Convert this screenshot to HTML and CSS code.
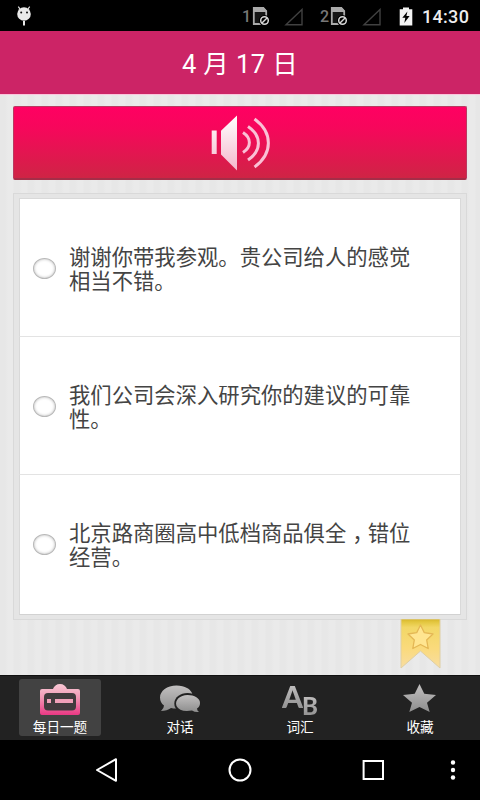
FILE: index.html
```html
<!DOCTYPE html>
<html lang="zh-CN">
<head>
<meta charset="utf-8">
<title>4 月 17 日</title>
<link rel="stylesheet" href="styles.css">
</head>
<body>
<div class="status">
  <svg class="droid" width="16" height="22" viewBox="0 0 16 22"><circle cx="8" cy="9" r="6.8" fill="#e9e9e9"/><path d="M4 4 2.3 1.6M12 4l1.7-2.4" stroke="#e9e9e9" stroke-width="1.2"/><path d="M8 16v4.6" stroke="#e9e9e9" stroke-width="2"/><circle cx="5.2" cy="7.5" r="1" fill="#111"/><circle cx="11" cy="7.5" r="1" fill="#111"/></svg>
  <div class="sim"><span>1</span>
    <svg width="18" height="20" viewBox="0 0 18 20"><path d="M1.800 18V1.800h9.400l3 3.400V18z" fill="#151515" stroke="#aaa" stroke-width="1.800"/><path d="M1 1h10.500L15 5v1H1z" fill="#aaa"/><circle cx="12.500" cy="14.500" r="5.500" fill="#000"/><circle cx="12.500" cy="14.500" r="3.800" fill="none" stroke="#d8d8d8" stroke-width="1.500"/><path d="m10 17 5-5" stroke="#d8d8d8" stroke-width="1.500"/></svg>
    <svg class="signal" width="20" height="18" viewBox="0 0 20 18"><path d="M2 16.700 18 1.500v15.200z" fill="none" stroke="#414141" stroke-width="1.400"/></svg>
  </div>
  <div class="sim sim2"><span>2</span>
    <svg width="18" height="20" viewBox="0 0 18 20"><path d="M1.800 18V1.800h9.400l3 3.400V18z" fill="#151515" stroke="#aaa" stroke-width="1.800"/><path d="M1 1h10.500L15 5v1H1z" fill="#aaa"/><circle cx="12.500" cy="14.500" r="5.500" fill="#000"/><circle cx="12.500" cy="14.500" r="3.800" fill="none" stroke="#d8d8d8" stroke-width="1.500"/><path d="m10 17 5-5" stroke="#d8d8d8" stroke-width="1.500"/></svg>
    <svg class="signal" width="20" height="18" viewBox="0 0 20 18"><path d="M2 16.700 18 1.500v15.200z" fill="none" stroke="#414141" stroke-width="1.400"/></svg>
  </div>
  <svg class="battery" width="14" height="19" viewBox="0 0 14 19"><path d="M.7 2.200H4V.5h6v1.700h3.300v16.300H.7z" fill="#f3f3f3"/><path d="M8.400 4.500 3.300 10.800h3L5.300 16l5.300-7H7.400z" fill="#000"/></svg>
  <time>14:30</time>
</div>
<header>4 月 17 日</header>
<main>
  <button class="play" aria-label="播放">
    <svg width="64" height="60" viewBox="0 0 64 60"><defs><linearGradient id="sp" x2="0" y2="1"><stop stop-color="#fff"/><stop offset="1" stop-color="#f5b7cc"/></linearGradient></defs><g fill="url(#sp)"><path d="M3.700 17.500h5v23.500h-5zM13 17.800 29 2.500v55L13 41.500z"/></g><g fill="none" stroke="#fac0d5" stroke-width="3"><path d="M35 19.500c8.500 5.500 8.500 14.500 0 20"/><path d="M40 13.500c13.900 9.500 13.900 24 0 33.500"/><path d="M46.500 6c18.500 13.500 18.500 34.500 0 48"/></g></svg>
  </button>
  <section class="panel">
    <label class="option"><i class="radio"></i><span class="text">谢谢你带我参观。贵公司给人的感觉<br>相当不错。</span></label>
    <label class="option"><i class="radio"></i><span class="text">我们公司会深入研究你的建议的可靠<br>性。</span></label>
    <label class="option"><i class="radio"></i><span class="text">北京路商圈高中低档商品俱全<span class="comma">，</span>错位<br>经营。</span></label>
  </section>
  <svg class="ribbon" width="41" height="52" viewBox="0 0 41 52"><defs><linearGradient id="rb" x2="0" y2="1"><stop stop-color="#d5b52a"/><stop offset=".06" stop-color="#e3c63e"/><stop offset=".17" stop-color="#f2d766"/><stop offset=".6" stop-color="#fada7c"/><stop offset="1" stop-color="#f8dda2"/></linearGradient></defs><path d="M1 0h39v49L20.500 32 1 49z" fill="url(#rb)" stroke="#dfcfa4" stroke-width="1"/><path d="m20.500 6 3.800 7.700 8.700 1.300-6.300 6 1.500 8.500-7.700-4-7.700 4 1.500-8.500-6.300-6 8.700-1.300z" fill="#ffe590" stroke="#e4b754" stroke-width="1.300" stroke-linejoin="round"/></svg>
</main>
<nav class="tabs">
  <div class="tab active">
    <svg width="42" height="34" viewBox="0 0 42 34"><defs><linearGradient id="pk" x2="0" y2="1"><stop stop-color="#f8c9d5"/><stop offset=".45" stop-color="#f296b4"/><stop offset="1" stop-color="#e93883"/></linearGradient></defs><path d="M3 6h11C15 3 17.500 1 21 1s6 2 7 5h11q2 0 2 2v22q0 2-2 2H3q-2 0-2-2V8q0-2 2-2z" fill="url(#pk)"/><rect x="5" y="10" width="32" height="17.500" rx="4" fill="#423b3e"/><path d="M8 16h4v4H8zM16 16h18v4H16z" fill="#f1a0b9"/></svg><span>每日一题</span></div>
  <div class="tab">
    <svg width="42" height="34" viewBox="0 0 42 34"><defs><linearGradient id="gr" x2="0" y2="1"><stop stop-color="#c2c0c0"/><stop offset="1" stop-color="#8d8d8d"/></linearGradient></defs><path d="M17.500 2.500C8 2.500 1 8 1 14.500q0 5 4 8 0 3-3 5.500 6 0 10-3 7 1.500 13-1.500C36 20 36 9 28 5Q24 2.500 17.500 2.500z" fill="url(#gr)"/><ellipse cx="28.500" cy="20.500" rx="13.200" ry="10.500" fill="#222"/><path d="M28.500 12c7 0 12.500 3.500 12.500 8q0 3.500-3 5.500 0 2 2 3.500-4 .5-7-1.500-12 2-15.500-4.500c-2-6 3.500-11 11-11z" fill="url(#gr)"/></svg><span>对话</span></div>
  <div class="tab">
    <div class="ab"><b>A</b><b class="b">B</b></div><span>词汇</span></div>
  <div class="tab">
    <svg width="42" height="34" viewBox="0 0 42 34"><path d="m20.500 1 4.800 9.800 11.700 1.200-9 7.800 2.700 9.200-10.200-5-10.200 5 2.700-9.200-9-7.800 11.700-1.200z" fill="url(#gr)"/></svg><span>收藏</span></div>
</nav>
<div class="system">
  <svg width="24" height="26" viewBox="0 0 24 26"><path d="m2 13 19-10.800v21.600z" fill="none" stroke="#fff" stroke-width="2" stroke-linejoin="round"/></svg>
  <svg width="24" height="26" viewBox="0 0 24 26"><circle cx="12" cy="13" r="10.500" fill="none" stroke="#fff" stroke-width="2"/></svg>
  <svg width="24" height="26" viewBox="0 0 24 26"><rect x="2.600" y="4" width="19.400" height="18" fill="none" stroke="#fff" stroke-width="2"/></svg>
  <svg class="more" width="6" height="26" viewBox="0 0 6 26"><g fill="#fff"><circle cx="3" cy="5.500" r="2.200"/><circle cx="3" cy="13" r="2.200"/><circle cx="3" cy="20.500" r="2.200"/></g></svg>
</div>
</body>
</html>
```
FILE: styles.css
```css
* { box-sizing: border-box; }
body {
  margin: 0;
  width: 480px;
  height: 800px;
  overflow: hidden;
  display: flex;
  flex-direction: column;
  background: #000;
  font-family: Roboto, "Noto Sans CJK SC", sans-serif;
}
svg { display: block; flex: none; }
.status {
  height: 31px;
  display: flex;
  align-items: center;
  padding: 1px 0 0 16px;
  color: #eee;
}
.droid { margin-right: 210px; }
.sim { display: flex; align-items: center; color: #777; font: 500 16px Roboto, sans-serif; width: 78px; }
.sim span { width: 10px; }
.signal { margin: 2px 0 0 14px; }
.sim2 { width: 79px; }
.battery { margin: 0 9px 0 0; }
time { font: 500 18px Roboto, sans-serif; letter-spacing: .3px; }
header {
  height: 63px;
  background: #cc2466;
  color: #fff;
  display: flex;
  align-items: center;
  justify-content: center;
  font-size: 25.5px;
  letter-spacing: .4px;
  padding-bottom: 2px;
}
main {
  height: 581px;
  padding: 12px 13px 0;
  border-top: 1px solid #fbc5dc;
  background: repeating-linear-gradient(90deg, #e7e7e7 0 5px, #eaeaea 8px 13px, #e7e7e7 14px);
  display: flex;
  flex-direction: column;
}
.play {
  height: 74px;
  flex: none;
  margin: -1px 0 13px;
  padding: 0;
  border: 1px solid #b93a60;
  border-bottom: 2px solid #a52d48;
  border-radius: 2px;
  background: linear-gradient(#ff0062, #f6075b 30%, #cf2445);
  display: flex;
  align-items: center;
  justify-content: center;
}
.panel {
  height: 427px;
  flex: none;
  border: 1px solid #d9d9d9;
  padding: 4px 5px;
  background: #e5e5e5;
}
.option {
  height: 138px;
  display: flex;
  align-items: center;
  padding-left: 13px;
  background: #fff;
  border: 0 solid #d9d9d9;
  border-width: 0 1px 1px;
  border-bottom-color: #e3e3e3;
}
.option:first-child { border-top: 1px solid #d9d9d9; height: 139px; }
.option:last-child { height: 140px; padding-bottom: 2px; border-bottom-color: #d2d2d2; }
.radio {
  width: 23px;
  height: 21px;
  border: 1.5px solid #b8b8b8;
  border-radius: 50%;
  box-shadow: inset 0 0 3px #bbb;
  margin: 1px 13px 0 0;
}
.text { font: 21.33px/24px "Noto Sans CJK SC", sans-serif; color: #444; white-space: nowrap; }
.comma { padding-left: 6px; margin-right: -6px; }
.ribbon { align-self: flex-end; margin: -1px 26px 0 0; }
.tabs { height: 65px; display: flex; background: #222; border-top: 1px solid #111; padding-top: 3px; }
.tab { flex: 1; height: 57px; display: flex; flex-direction: column; align-items: center; color: #fff; font: 13.6px/18px "Noto Sans CJK SC", sans-serif; }
.tab svg, .ab { margin-top: 4px; height: 34px; }
.tab.active { flex: none; width: 82px; margin: 0 19px; background: #424242; border-radius: 3px; }
.ab { display: flex; font: 900 30px/26px Lato, sans-serif; }
.ab b { font-weight: 900; background: linear-gradient(#c5c3c3, #8d8d8d); background-clip: text; color: transparent; height: 28px; }
.ab .b { font-size: 24px; margin: 11px 0 0 -1px; height: 24px; line-height: 24px; }
.system { height: 60px; display: flex; align-items: center; padding-left: 95px; }
.system svg { margin-right: 109px; }
.system svg:nth-child(3) { margin-right: 65px; }
.system .more { margin: 0; }
```
